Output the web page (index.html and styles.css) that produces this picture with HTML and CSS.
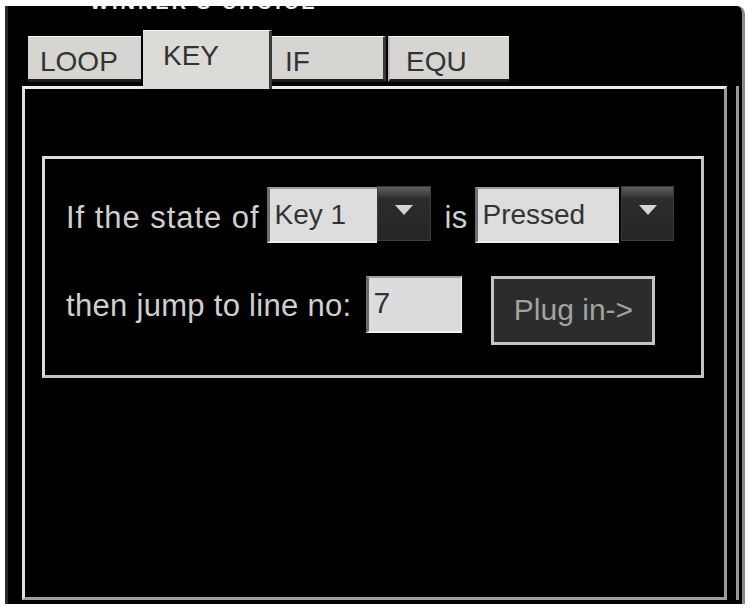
FILE: index.html
```html
<!DOCTYPE html>
<html>
<head>
<meta charset="utf-8">
<link rel="stylesheet" href="styles.css">
</head>
<body>
<div class="window">
  <div class="title"><span>WINNER'S CHOICE</span></div>
  <div class="tabs">
    <div class="tab tab-loop">LOOP</div>
    <div class="tab tab-key active">KEY</div>
    <div class="tab tab-if">IF</div>
    <div class="tab tab-equ">EQU</div>
  </div>
  <div class="body-row">
    <div class="panel">
      <div class="group">
        <div class="row row1">
          <span class="label label1">If the state of</span>
          <div class="select">
            <div class="select-box sel-key">Key 1</div>
            <div class="select-btn btn-key"><svg width="18" height="10" viewBox="0 0 18 10"><polygon points="0,0 18,0 9,10" fill="#d4d4d4"/></svg></div>
          </div>
          <span class="label label-is">is</span>
          <div class="select">
            <div class="select-box sel-state">Pressed</div>
            <div class="select-btn btn-state"><svg width="18" height="10" viewBox="0 0 18 10"><polygon points="0,0 18,0 9,10" fill="#d4d4d4"/></svg></div>
          </div>
        </div>
        <div class="row row2">
          <span class="label label2">then jump to line no:</span>
          <div class="input">7</div>
          <div class="plug">Plug in-&gt;</div>
        </div>
      </div>
    </div>
    <div class="strip"></div>
  </div>
</div>
</body>
</html>
```
FILE: styles.css
```css
html, body {
  margin: 0;
  padding: 0;
  background: #ffffff;
  width: 748px;
  height: 607px;
  overflow: hidden;
}
body {
  padding-top: 6px;
  box-sizing: border-box;
  font-family: "Liberation Sans", Arial, sans-serif;
}
.window {
  margin-left: 5px;
  border-left: 3px solid #2a2a2a;
  border-right: 3px solid #8a8a8a;
  width: 734px;
  height: 598px;
  background: #000;
  border-top-right-radius: 8px;
  box-sizing: content-box;
}
.title {
  height: 8px;
  overflow: hidden;
  padding-left: 82px;
}
.title span {
  display: block;
  margin-top: -15px;
  font-size: 20px;
  line-height: 22px;
  font-weight: bold;
  letter-spacing: 3px;
  color: #f0f0f0;
}
.tabs {
  display: flex;
  align-items: flex-start;
  margin-top: 16px;
  padding-left: 20px;
  height: 56px;
}
.tab {
  box-sizing: border-box;
  height: 46px;
  margin-top: 6px;
  background: #d6d5d1;
  border-top: 1px solid #f4f4f4;
  border-bottom: 3px solid #1c1c1c;
  color: #333;
  font-size: 28px;
  line-height: 32px;
  padding-top: 9px;
}
.tab-loop { width: 113px; padding-left: 12px; margin-right: 2px; }
.tab-key {
  width: 129px;
  padding-left: 20px;
}
.tab.active {
  position: relative;
  z-index: 2;
  height: 59px;
  margin-top: 0;
  background: #dcdbd7;
  border-bottom: none;
  border-right: 3px solid #3a3a3a;
}
.tab-if { width: 114px; padding-left: 13px; border-right: 3px solid #3a3a3a; }
.tab-equ { width: 121px; padding-left: 16px; margin-left: 2px; border-left: 2px solid #bdbdbd; }

.body-row {
  display: flex;
  margin-left: 14px;
}
.panel {
  box-sizing: border-box;
  width: 705px;
  height: 514px;
  border-style: solid;
  border-width: 3px;
  border-color: #ececec #9a9a9a #a0a0a0 #e0e0e0;
}
.strip {
  margin-left: 9px;
  width: 3px;
  height: 514px;
  background: #9a9a9a;
}
.group {
  box-sizing: border-box;
  margin: 67px 0 0 17px;
  width: 662px;
  height: 222px;
  border-style: solid;
  border-width: 3px;
  border-color: #dcdcdc #c4c4c4 #c4c4c4 #dcdcdc;
  padding: 28px 0 0 21px;
}
.row {
  display: flex;
  align-items: flex-start;
}
.row1 { height: 56px; }
.row2 { margin-top: 33px; }
.label {
  color: #cfcfcf;
  font-size: 31px;
  line-height: 56px;
  letter-spacing: 0.3px;
  padding-top: 3px;
}
.label1 { margin-right: 8px; letter-spacing: 0.95px; }
.label-is { margin: 0 8px 0 13px; }
.label2 { line-height: 57px; padding-top: 1px; }

.select {
  display: flex;
  align-items: flex-start;
}
.select-box {
  box-sizing: border-box;
  height: 56px;
  background: #dddddd;
  border-left: 3px solid #6e6e6e;
  border-top: 2px solid #9a9a9a;
  border-bottom: 2px solid #f0f0f0;
  color: #333;
  font-size: 28px;
  line-height: 50px;
  padding-left: 4px;
  padding-top: 1px;
}
.sel-key { width: 110px; }
.sel-state { width: 144px; }
.select-btn {
  box-sizing: border-box;
  height: 55px;
  margin-top: -1px;
  background: linear-gradient(#5c5c5c 0, #4a4a4a 10%, #2c2c2c 22%, #262626 100%);
  border: 1px solid #3c3c3c;
  display: flex;
  align-items: center;
  justify-content: center;
  padding-bottom: 8px;
}
.btn-key { width: 54px; }
.btn-state { width: 53px; margin-left: 2px; }

.input {
  box-sizing: border-box;
  margin-left: 15px;
  width: 96px;
  height: 57px;
  background: #dcdcdc;
  border-left: 3px solid #6a6a6a;
  border-top: 2px solid #a0a0a0;
  border-bottom: 2px solid #f2f2f2;
  border-right: 1px solid #f2f2f2;
  color: #333;
  font-size: 30px;
  line-height: 50px;
  padding-left: 4px;
}
.plug {
  box-sizing: border-box;
  margin-left: 29px;
  width: 164px;
  height: 69px;
  border: 3px solid #c4c4c4;
  background: #2c2c2c;
  color: #a2a2a2;
  font-size: 30px;
  line-height: 62px;
  text-align: center;
}
```
